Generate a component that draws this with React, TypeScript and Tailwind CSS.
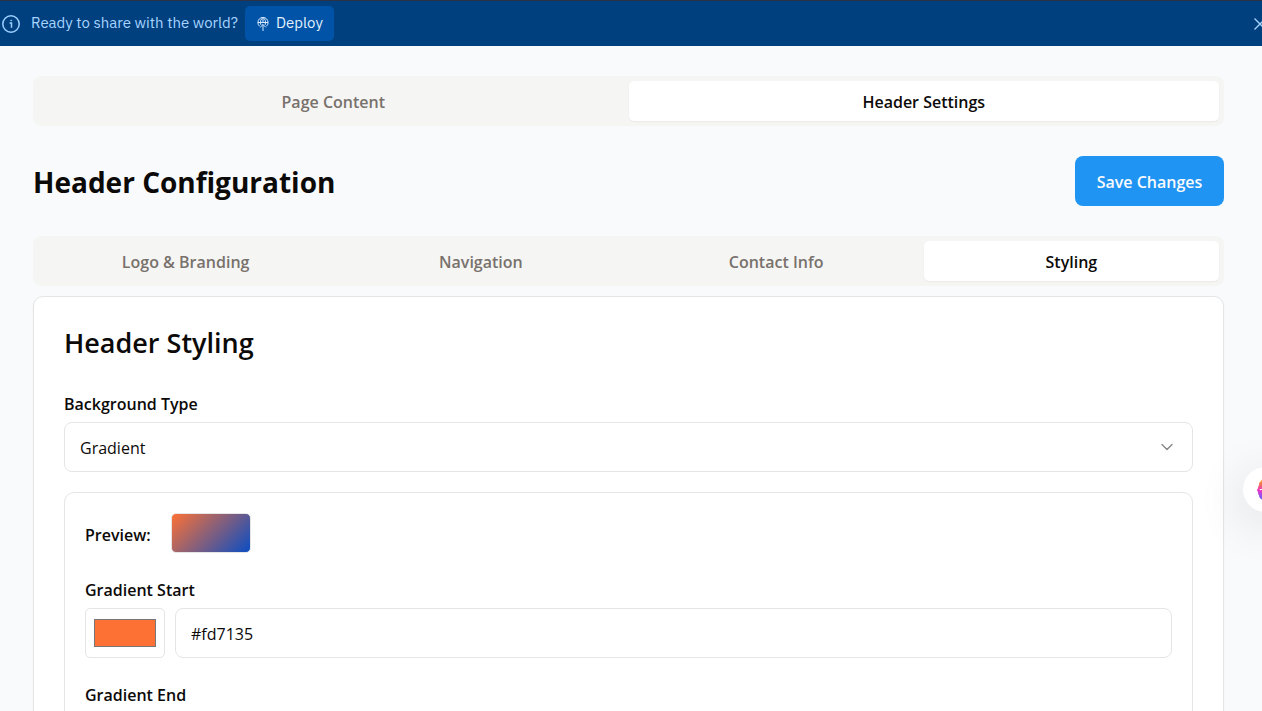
import { useState } from "react";
import { ChevronDown } from "lucide-react";

const fieldClass =
  "h-[50px] w-full rounded-lg border border-[#e5e5e5] bg-white px-[15px] pt-[2px] text-[16px] text-[#0c0a09] outline-none";

function InfoIcon() {
  return (
    <svg viewBox="0 0 18 18" className="size-[18px] shrink-0" fill="none" stroke="#9dd0ff" strokeWidth="1.5" aria-hidden="true">
      <circle cx="9" cy="9" r="8.2" />
      <path d="M7.6 8h1.900v4.800" />
      <circle cx="9.2" cy="5.5" r="0.5" fill="#9dd0ff" strokeWidth="0.8" />
    </svg>
  );
}

function DeployIcon() {
  return (
    <svg viewBox="0 0 14 16" className="h-4 w-[14px] shrink-0" fill="none" stroke="#d6eaff" strokeWidth="1" aria-hidden="true">
      <path d="M3.6 10.300A5.1 5.1 0 1 1 10.400 10.300" />
      <path d="M2 6.500h10" />
      <path d="M4.800 8.800C4 6 4.600 2.800 7 1.500c2.400 1.300 3 4.500 2.200 7.300" />
      <path d="M7 1.500v5M7 15V8.500M4.200 11.300 7 8.500l2.800 2.800" />
    </svg>
  );
}

function AssistantIcon() {
  return (
    <svg viewBox="0 0 20 20" className="size-[22px]" aria-hidden="true">
      <defs>
        <linearGradient id="assistant" x1="0.1" y1="0" x2="0.1" y2="1">
          <stop offset="0.05" stopColor="#f9a01f" />
          <stop offset="0.25" stopColor="#f4705c" />
          <stop offset="0.5" stopColor="#ee35c4" />
          <stop offset="0.9" stopColor="#6b5cff" />
        </linearGradient>
      </defs>
      <path
        fill="url(#assistant)"
        d="M7 0C5 0 4 .8 3.600 2 2.300 2.700 1.600 4 1.900 5.600 1 6.500.9 7.500 1 8.300-.3 9.200-.3 10.800.9 11.700c-.1 1.300.1 2.300.9 3.100 0 1.700.8 2.900 2.200 3.300C4.600 19.300 5.500 20 7.500 20h5c3.500 0 5.500-2 6-5 2-3 2-7 0-10-.5-3-2.500-5-6-5z"
      />
      <path d="M2.500 9.500h2.500l2-3M5 9.500l2 3" stroke="#fff" strokeWidth="1" fill="none" />
    </svg>
  );
}

function Tabs({ items, initial, label, columns }: { items: string[]; initial: string; label: string; columns: string }) {
  const [active, setActive] = useState(initial);
  return (
    <div role="tablist" aria-label={label} className={`grid h-[50px] rounded-lg bg-[#f5f5f4] p-[5px] ${columns}`}>
      {items.map((item) => (
        <button
          key={item}
          type="button"
          role="tab"
          aria-selected={item === active}
          onClick={() => setActive(item)}
          className={`rounded-[5px] pt-[2px] text-[16px] leading-6 font-semibold ${
            item === active ? "bg-white text-[#0c0a09] shadow-xs" : "text-[#78716c]"
          }`}
        >
          {item}
        </button>
      ))}
    </div>
  );
}

function ColorField({ id, label, initial }: { id: string; label: string; initial: string }) {
  const [color, setColor] = useState(initial);
  return (
    <div>
      <label htmlFor={id} className="block text-[16px] leading-6 font-semibold">
        {label}
      </label>
      <div className="mt-[6px] flex gap-[10px]">
        <input
          type="color"
          aria-label={`${label} picker`}
          value={color}
          onChange={(e) => setColor(e.target.value)}
          className="h-[50px] w-20 shrink-0 rounded-[5px] border border-[#e5e5e5] bg-white p-[6px]"
        />
        <input id={id} type="text" value={color} onChange={(e) => setColor(e.target.value)} className={fieldClass} />
      </div>
    </div>
  );
}

export default function App() {
  return (
    <div className="flex h-screen flex-col overflow-hidden bg-[#f8fafc] font-['Open_Sans',sans-serif] text-[#0c0a09]">
      <div className="flex h-[46px] shrink-0 items-center overflow-hidden border-t border-[#2b3245] bg-[#00407f] pl-[2px] font-['IBM_Plex_Sans',Roboto,sans-serif] text-[15px]">
        <InfoIcon />
        <p className="ml-[11px] text-[#a8d4ff]">Ready to share with the world?</p>
        <button type="button" className="ml-[7px] flex h-[35px] items-center gap-[6px] rounded-[5px] bg-[#0053a6] px-[11px] text-[#e3f1ff]">
          <DeployIcon />
          Deploy
        </button>
        <button type="button" aria-label="Dismiss" className="-mr-1 ml-auto">
          <svg viewBox="0 0 12 12" className="size-3" stroke="#a8d4ff" strokeWidth="1.3" aria-hidden="true">
            <path d="M0.500 0.500l11 11M11.500 0.500l-11 11" />
          </svg>
        </button>
      </div>

      <main className="min-h-0 flex-1 overflow-hidden pt-[30px] pr-[38px] pl-[33px]">
        <Tabs label="Page settings" columns="grid-cols-2" items={["Page Content", "Header Settings"]} initial="Header Settings" />

        <div className="my-[30px] flex h-[50px] items-center justify-between">
          <h1 className="pt-[2px] text-[28px] leading-9 font-bold">Header Configuration</h1>
          <button
            type="button"
            className="h-full min-w-[149px] rounded-lg bg-[#2094f3] px-5 pt-[2px] text-[16px] font-semibold text-[#f8fafc]"
          >
            Save Changes
          </button>
        </div>

        <Tabs
          label="Header sections"
          columns="grid-cols-4"
          items={["Logo & Branding", "Navigation", "Contact Info", "Styling"]}
          initial="Styling"
        />

        <section className="mt-[10px] rounded-[10px] border border-[#e5e5e5] bg-white p-[30px] shadow-xs">
          <h2 className="text-[27px] leading-8 font-semibold">Header Styling</h2>

          <label htmlFor="background-type" className="mt-[33px] block text-[16px] leading-6 font-semibold">
            Background Type
          </label>
          <div className="relative mt-[6px]">
            <select id="background-type" defaultValue="Gradient" className={`appearance-none ${fieldClass}`}>
              <option>Solid Color</option>
              <option>Gradient</option>
              <option>Image</option>
            </select>
            <ChevronDown className="pointer-events-none absolute top-[15px] right-4 size-5 text-[#868482]" strokeWidth={1.6} aria-hidden="true" />
          </div>

          <div className="mt-5 flex flex-col gap-5 rounded-[10px] border border-[#e5e5e5] p-5">
            <div className="flex h-10 items-center gap-5">
              <span className="pt-1 text-[16px] leading-6 font-semibold">Preview:</span>
              <div className="h-10 w-20 rounded-[5px] border border-[#e5e5e5] bg-[linear-gradient(135deg,#fd7135,#0a4dc4)]" />
            </div>
            <div className="mt-[5px] flex flex-col gap-[25px]">
              <ColorField id="gradient-start" label="Gradient Start" initial="#fd7135" />
              <ColorField id="gradient-end" label="Gradient End" initial="#0a4dc4" />
            </div>
          </div>
        </section>
      </main>

      <button
        type="button"
        aria-label="Open assistant"
        className="fixed top-[467px] -right-[26px] flex size-[45px] items-center rounded-full bg-white pl-[14px] shadow-[0_10px_50px_rgba(0,0,0,0.14)]"
      >
        <AssistantIcon />
      </button>
    </div>
  );
}
